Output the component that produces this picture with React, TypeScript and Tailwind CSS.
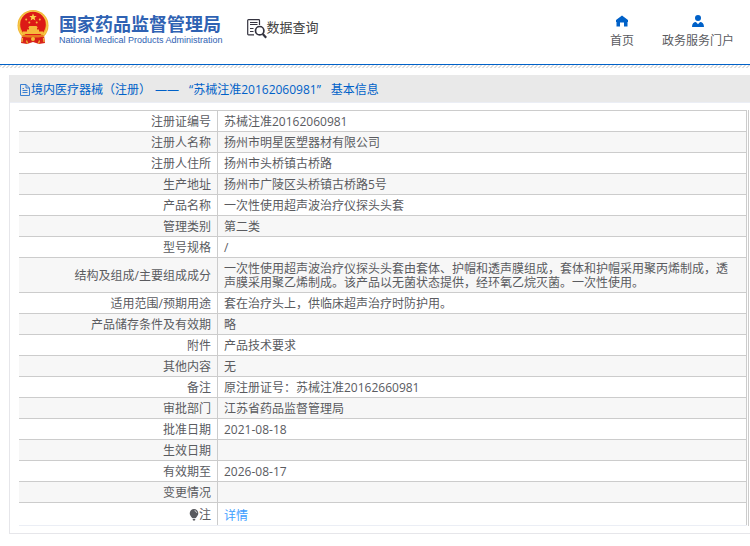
import { ReactNode } from "react";

type Row = { label: string; value: ReactNode };

const rows: Row[] = [
  { label: "注册证编号", value: "苏械注准20162060981" },
  { label: "注册人名称", value: "扬州市明星医塑器材有限公司" },
  { label: "注册人住所", value: "扬州市头桥镇古桥路" },
  { label: "生产地址", value: "扬州市广陵区头桥镇古桥路5号" },
  { label: "产品名称", value: "一次性使用超声波治疗仪探头头套" },
  { label: "管理类别", value: "第二类" },
  { label: "型号规格", value: "/" },
  {
    label: "结构及组成/主要组成成分",
    value:
      "一次性使用超声波治疗仪探头头套由套体、护帽和透声膜组成，套体和护帽采用聚丙烯制成，透声膜采用聚乙烯制成。该产品以无菌状态提供，经环氧乙烷灭菌。一次性使用。",
  },
  { label: "适用范围/预期用途", value: "套在治疗头上，供临床超声治疗时防护用。" },
  { label: "产品储存条件及有效期", value: "略" },
  { label: "附件", value: "产品技术要求" },
  { label: "其他内容", value: "无" },
  { label: "备注", value: "原注册证号：苏械注准20162660981" },
  { label: "审批部门", value: "江苏省药品监督管理局" },
  { label: "批准日期", value: "2021-08-18" },
  { label: "生效日期", value: "" },
  { label: "有效期至", value: "2026-08-17" },
  { label: "变更情况", value: "" },
];

function Emblem() {
  return (
    <svg width="32" height="36" viewBox="0 0 32 36" aria-hidden="true">
      <path d="M5 26 L4 34 L10 35 L16 33 L22 35 L28 34 L27 26Z" fill="#d9241b" />
      <circle cx="16" cy="16.5" r="15.5" fill="#f2b632" />
      <circle cx="16" cy="16.5" r="14.2" fill="none" stroke="#f7cf52" strokeWidth="1" />
      <circle cx="16" cy="15.5" r="12.8" fill="#dc1a16" />
      <path d="M16 4.600l1 2.500h2.700l-2.100 1.700.8 2.600-2.400-1.500-2.400 1.500.8-2.600-2.100-1.700H15z" fill="#fbd44b" />
      <g fill="#f6b93c">
        <circle cx="9.200" cy="10.500" r="1" />
        <circle cx="22.800" cy="10.500" r="1" />
        <circle cx="12.300" cy="13.400" r="1" />
        <circle cx="19.700" cy="13.400" r="1" />
        <path d="M12.500 17h7l1.500 1.800h-1v1.600h2v2H26v2.600H6v-2.600h4v-2h2v-1.600h-1z" />
      </g>
      <path d="M5 26h22l-2.500 3-8.500 1.500L7.500 29z" fill="#e9781f" />
      <path d="M5.500 27.500c3.500 1.300 6 1 10.500 1s7 .3 10.500-1l-2.500 4-3.500 1.500L16 31.500 11.500 33 8 31.500z" fill="#d61c17" />
      <circle cx="16" cy="30" r="2" fill="#f4bd3a" />
      <path d="M9.500 31.500l1 3M22.500 31.500l-1 3M5.500 29l-.5 4M26.500 29l.5 4" stroke="#f4bd3a" strokeWidth="1.200" />
    </svg>
  );
}

function QueryIcon() {
  return (
    <svg width="20" height="20" viewBox="0 0 20 20" fill="none" stroke="#34333f" aria-hidden="true">
      <path d="M12.500 6V1.500a.8.8 0 0 0-.8-.8H1.500a.8.8 0 0 0-.8.8v13.600a.8.8 0 0 0 .8.8H7" strokeWidth="1.200" />
      <path d="M3 3.500h7.500M3 5.500h7.500M3 9.500h3.500M3 12.500h3.500" strokeWidth="1.200" />
      <circle cx="12.700" cy="11.700" r="4.200" strokeWidth="1.700" />
      <path d="M15.800 15l3.400 3.800" strokeWidth="2.200" />
    </svg>
  );
}

function HomeIcon() {
  return (
    <svg width="12" height="12" viewBox="0 0 12 12" fill="#0061c8" aria-hidden="true">
      <path d="M6 .5L0 5v2h.5v4.500h3.500V7.500h4v4h3.500V7h.5V5z" />
    </svg>
  );
}

function UserIcon() {
  return (
    <svg width="12" height="12" viewBox="0 0 12 12" fill="#0061c8" aria-hidden="true">
      <circle cx="6" cy="3" r="3" />
      <path d="M0 12c0-3.200 1.700-5 3.900-5L6 9.200 8.100 7C10.300 7 12 8.800 12 12z" />
    </svg>
  );
}

function DocumentIcon() {
  return (
    <svg width="10" height="12" viewBox="0 0 10 12" fill="none" stroke="#3b7fd0" aria-hidden="true">
      <path d="M.5.5h5.500l3.500 3.500v7.500h-9z" />
      <path d="M6 .5V4h3.500M2.500 4.500H4M2.500 6.500h5M2.500 8.500h5" />
    </svg>
  );
}

function BulbIcon() {
  return (
    <svg width="10" height="12" viewBox="0 0 10 12" fill="#5a5b5f" aria-hidden="true">
      <path d="M5 0a4.300 4.300 0 0 1 4.300 4.300c0 2-1.400 3.300-2.500 4.700H3.200C2.100 7.600.7 6.300.7 4.300A4.300 4.300 0 0 1 5 0z" />
      <path d="M3.600 9.800h2.800L6 11.400H4z" />
      <path d="M5.600 1.700c1.100.2 1.900 1 2.100 2.100" fill="none" stroke="#fff" strokeWidth=".8" />
    </svg>
  );
}

const labelCell = "border-t border-r border-[#ccc] pt-1 pr-1.5 pb-0.5 text-right align-middle font-normal";
const valueCell = "border-t border-r border-[#ccc] pt-1 pr-2.5 pb-0.5 pl-1.5 align-middle";

export default function App() {
  return (
    <div
      lang="zh-CN"
      className="min-h-screen bg-white font-['Open_Sans','Noto_Sans_CJK_SC',sans-serif] text-xs leading-[14px] text-[#5a5b5f]"
    >
      <header className="flex h-16 items-start justify-between px-4">
        <div className="flex pt-[9px] pl-px">
          <Emblem />
          <div className="ml-2.5 pt-1 whitespace-nowrap text-[#2f62b3]">
            <h1 className="font-['Noto_Sans_CJK_SC',sans-serif] text-[18px] leading-5 font-bold">国家药品监督管理局</h1>
            <p className="font-['Liberation_Sans',sans-serif] text-[9px] leading-[14px]">
              National Medical Products Administration
            </p>
          </div>
          <div className="ml-6 flex items-start pt-2.5">
            <QueryIcon />
            <span className="font-['Noto_Sans_CJK_SC',sans-serif] text-[13px] leading-4 whitespace-nowrap text-[#404040]">
              数据查询
            </span>
          </div>
        </div>
        <nav className="flex gap-7 pt-[15px]">
          <a href="#home" className="flex flex-col items-center gap-[7px]">
            <HomeIcon />
            首页
          </a>
          <a href="#portal" className="flex flex-col items-center gap-[7px]">
            <UserIcon />
            政务服务门户
          </a>
        </nav>
      </header>
      <div className="h-px bg-[#0061c8]" />
      <div className="h-[3px] bg-[linear-gradient(135deg,#dedede_25%,#fff_25%,#fff_50%,#dedede_50%,#dedede_75%,#fff_75%)] bg-size-[4px_4px]" />

      <main className="mt-[7px] ml-[9px] border-b border-l border-[#e6e6ea] pb-[7px]">
        <h2 className="flex h-7 items-center border-b border-[#ebeef5] bg-[#e9e9e9] pt-0.5 pl-2.5 whitespace-nowrap text-[#0061c8]">
          <DocumentIcon />
          <span className="ml-px flex gap-1">
            <span>境内医疗器械（注册）</span>
            <span>——</span>
            <span className="ml-1.5">“苏械注准20162060981”</span>
            <span className="ml-1.5">基本信息</span>
          </span>
        </h2>
        <div className="mt-[7px] mr-px ml-[9px] border-r border-[#ccc] pr-px">
          <table className="w-full table-fixed border-separate border-spacing-0 border-b border-[#ebeef5]">
            <colgroup>
              <col className="w-[199px]" />
              <col />
            </colgroup>
            <tbody>
              {rows.map((row) => (
                <tr key={row.label} className="h-[21px] even:bg-[#f7f7f7]">
                  <th scope="row" className={labelCell}>
                    {row.label}
                  </th>
                  <td className={valueCell}>{row.value}</td>
                </tr>
              ))}
              <tr>
                <th scope="row" className={labelCell}>
                  <span className="flex items-center justify-end">
                    <BulbIcon />注
                  </span>
                </th>
                <td className="border-t border-r border-[#ccc] pt-1.5 pr-2.5 pb-0.5 pl-1.5 align-middle">
                  <a href="#detail" className="text-[#409eff]">
                    详情
                  </a>
                </td>
              </tr>
            </tbody>
          </table>
        </div>
      </main>
    </div>
  );
}
